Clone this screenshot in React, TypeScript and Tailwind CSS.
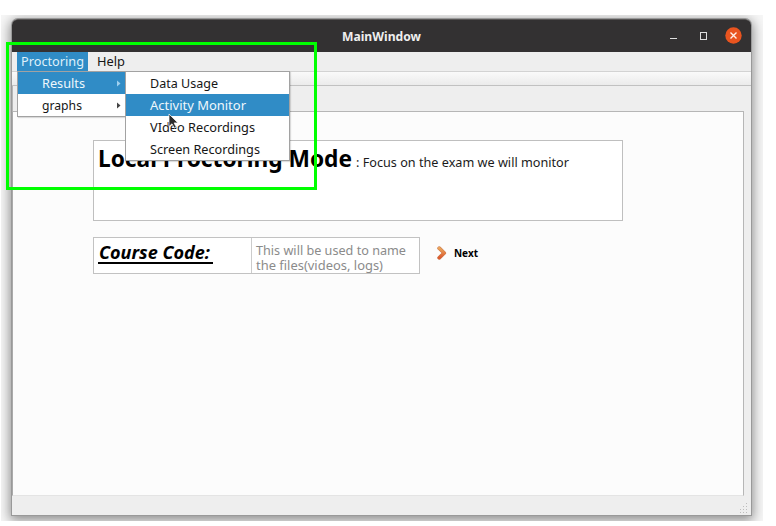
import type { ReactNode } from "react";

function Label({ children, width, className = "h-5" }: { children: string; width: number; className?: string }) {
  return (
    <svg width={width} className={`block shrink-0 overflow-visible ${className}`}>
      <text x="0" y="14" textLength={width} lengthAdjust="spacingAndGlyphs" fill="currentColor">
        {children}
      </text>
    </svg>
  );
}

function MenuItem({ label, width, active, arrow }: { label: string; width: number; active?: boolean; arrow?: boolean }) {
  return (
    <div className={`flex h-[22px] items-center justify-between pl-[24px] pr-[4px] ${active ? "bg-[#308cc6] text-[#eef7fc]" : "text-[#161616]"}`}>
      <Label width={width} className="mt-[2px] h-5">{label}</Label>
      {arrow && (
        <svg width="4" height="7" viewBox="0 0 4 7"><path d="M0 0.5 3.5 3.5 0 6.5Z" fill={active ? "#9fd0ef" : "#444"} /></svg>
      )}
    </div>
  );
}

function Popup({ className, children }: { className: string; children: ReactNode }) {
  return <div className={`absolute border border-[#a2a2a2] bg-white shadow-[1px_1px_1px_#00000022] ${className}`}>{children}</div>;
}

function TitleBar() {
  return (
    <header className="relative flex h-[33px] shrink-0 items-center rounded-t-[6px] border-t border-[#575555] bg-[#333132] text-[#eeeeee]">
      <div className="ml-[330px] pt-px text-[12px] font-bold"><Label width={79}>MainWindow</Label></div>
      <div className="ml-auto flex items-center pr-[9px]">
        <div className="mt-[4px] mr-[23px] h-px w-[7px] bg-[#dedede]" />
        <div className="mr-[18px] h-[8px] w-[7px] border border-[#dedede]" />
        <svg className="-mt-px" width="17" height="17" viewBox="0 0 17 17">
          <circle cx="8.5" cy="8.5" r="8.2" fill="#e9541f" />
          <path d="m5.5 5.5 6 6m0-6-6 6" stroke="#fff0e8" strokeWidth="1.4" />
        </svg>
      </div>
    </header>
  );
}

export default function App() {
  return (
    <div className="relative h-[526px] w-[776px] overflow-hidden bg-white font-['Noto_Sans','Open_Sans',sans-serif] text-[12.75px]">
      <div className="h-[15px]" />
      <div className="ml-px h-[506px] w-[762px] overflow-hidden bg-[#f6f6f6] pl-[11px] pt-1">
        <main className="flex h-[496px] w-[739px] flex-col rounded-t-[6px] bg-[#eeeeee] shadow-[0_0_0_1px_#999999,0_3px_12px_2px_#00000070]">
          <TitleBar />
          <nav className="flex h-5 shrink-0 border-b border-[#d3d3d3] pl-[5px]">
            <div className="flex w-[71px] items-center justify-center bg-[#308cc6] pt-px text-[#dff0fa]"><Label width={63}>Proctoring</Label></div>
            <div className="ml-[9px] flex items-center pt-px text-[#161616]"><Label width={28}>Help</Label></div>
          </nav>
          <div className="h-[14px] shrink-0 border-b border-[#c1c1c1] bg-gradient-to-b from-[#fafafa] to-[#ebebeb]" />
          <div className="h-[25px] shrink-0 border-l border-[#b5b5b5] bg-[#eeeeee]" />
          <section className="mr-[7px] h-[385px] shrink-0 border border-b-[#e4e4e4] border-l-[#aaaaaa] border-r-[#b6b6b6] border-t-[#b6b6b6] bg-[#fcfcfc] pl-20 pt-7">
            <div className="flex h-[81px] w-[530px] border border-[#bfbfbf] bg-white pl-[4px] text-black">
              <div className="pt-[12px] text-[23px] font-bold"><Label width={254}>Local Proctoring Mode</Label></div>
              <div className="ml-1 pt-[12px] text-[#1b1b1b]"><Label width={213}>: Focus on the exam we will monitor</Label></div>
            </div>
            <div className="mt-[16px] flex h-[37px] items-center">
              <div className="flex h-full w-[327px] border border-[#c2c2c2] bg-white">
                <div className="w-[158px] border-r border-[#cccccc] pl-1 text-[17.5px] font-bold italic text-black">
                  <div className="mt-[7px] h-[19px] w-[115px] border-b-2 border-black"><Label width={111} className="ml-px h-[17px]">Course Code:</Label></div>
                </div>
                <div className="pl-1 pt-[3px] text-[#8b8b8b]">
                  <Label width={150} className="h-[15px]">This will be used to name</Label>
                  <Label width={127} className="h-[15px]">the files(videos, logs)</Label>
                </div>
              </div>
              <svg className="ml-[17px] mt-[-5px]" width="10" height="14" viewBox="0 0 10 14">
                <defs><linearGradient id="chevron" x2="0" y2="1"><stop stopColor="#eaa65c" /><stop offset="1" stopColor="#dc592e" /></linearGradient></defs>
                <path d="M2.2 2.2 7.2 7 2.2 11.8" fill="none" stroke="#c9794f" strokeWidth="3.8" strokeLinejoin="round" strokeLinecap="round" />
                <path d="M2.2 2.2 7.2 7 2.2 11.8" fill="none" stroke="url(#chevron)" strokeWidth="2.9" strokeLinejoin="round" strokeLinecap="round" />
              </svg>
              <div className="ml-[7px] mt-[-5px] text-[11px] font-bold text-black"><Label width={24}>Next</Label></div>
            </div>
          </section>
          <footer className="flex min-h-0 flex-1 items-end justify-end pb-[2px] pr-[2px]">
            <svg width="10" height="10" viewBox="0 0 10 10" fill="#bdbdbd"><path d="M7 0h1v1H7zM4 3h1v1H4zM7 3h1v1H7zM1 6h1v1H1zM4 6h1v1H4zM7 6h1v1H7zM1 9h1v1H1zM4 9h1v1H4zM7 9h1v1H7z" /></svg>
          </footer>
        </main>
      </div>

      <Popup className="left-[17px] top-[71px] w-[109px]">
        <MenuItem label="Results" width={43} active arrow />
        <MenuItem label="graphs" width={40} arrow />
      </Popup>
      <Popup className="left-[125px] top-[71px] w-[165px]">
        <MenuItem label="Data Usage" width={68} />
        <MenuItem label="Activity Monitor" width={96} active />
        <MenuItem label="VIdeo Recordings" width={105} />
        <MenuItem label="Screen Recordings" width={110} />
      </Popup>
      <div className="absolute left-[6px] top-[42px] h-[148px] w-[311px] border-[3px] border-[#00ff00]" />
      <svg className="absolute left-[168px] top-[113px]" width="11" height="17" viewBox="0 0 11 17">
        <path d="M1 1v12.5l3-2.7 2.2 4.3 2-1-2.1-4.2H10Z" fill="#2c2c2c" stroke="#ffffff" strokeWidth=".7" />
      </svg>
    </div>
  );
}
